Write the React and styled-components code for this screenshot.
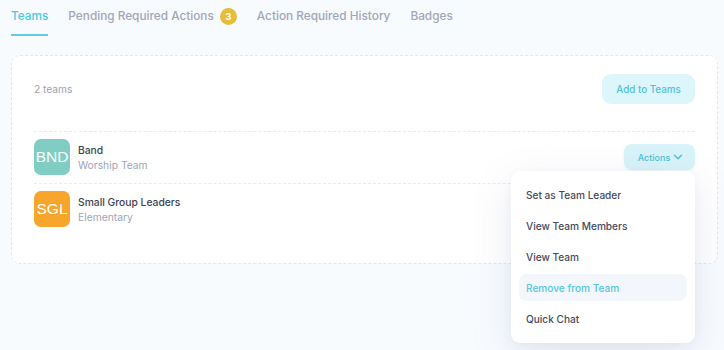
import React from "react";
import styled, { createGlobalStyle } from "styled-components";

const Global = createGlobalStyle`
  html, body { margin: 0; padding: 0; background: #f8fbfe; }
  body { font-family: Inter, "Noto Sans", sans-serif; -webkit-font-smoothing: antialiased; }
  * { box-sizing: border-box; }
`;

const Page = styled.div`
  padding: 0 6px 0 11px;
  height: 350px;
  overflow: hidden;
`;

const Tabs = styled.nav`
  display: flex;
  gap: 20px;
  height: 36px;
`;

const Tab = styled.div`
  display: flex;
  align-items: center;
  gap: 6px;
  height: 36px;
  padding-bottom: 2px;
  font-size: 11.8px;
  font-weight: 500;
  color: ${(p) => (p.$active ? "#4fc8de" : "#a2a6b9")};
  border-bottom: 2px solid ${(p) => (p.$active ? "#5fcfe3" : "transparent")};
`;

const Badge = styled.span`
  display: inline-flex;
  align-items: center;
  justify-content: center;
  width: 17px;
  height: 17px;
  border-radius: 50%;
  background: #e7bd3c;
  color: #fff;
  font-size: 9px;
  font-weight: 700;
`;

const Card = styled.section`
  margin-top: 19px;
  background: #fff;
  border: 1px dashed #e2e6ef;
  border-radius: 9px;
  padding: 18px 22px 28px;
`;

const Header = styled.div`
  display: flex;
  align-items: center;
  justify-content: space-between;
  margin-bottom: 27px;
`;

const Count = styled.span`
  font-size: 10.2px;
  color: #9da1b3;
`;

const PrimaryButton = styled.button`
  height: 30px;
  width: 93px;
  border: none;
  border-radius: 9px;
  background: #ddf6fb;
  color: #4dc3d9;
  font-family: inherit;
  font-size: 9.8px;
  font-weight: 500;
`;

const Row = styled.div`
  display: flex;
  align-items: center;
  gap: 8px;
  padding: 7px 0 8px;
  border-top: 1px dashed #e8ebf1;
  position: relative;
`;

const Avatar = styled.div`
  width: 36px;
  height: 36px;
  border-radius: 7px;
  background: ${(p) => p.$color};
  color: #fff;
  display: flex;
  align-items: center;
  justify-content: center;
  font-family: "Liberation Sans", Arial, sans-serif;
  font-size: 15.5px;
  flex-shrink: 0;
`;

const Info = styled.div`
  display: flex;
  flex-direction: column;
  gap: 3px;
  flex: 1;
`;

const Name = styled.span`
  font-size: 10.3px;
  font-weight: 500;
  color: #3e4254;
`;

const Sub = styled.span`
  font-size: 10.3px;
  color: #a1a4b6;
`;

const ActionsWrap = styled.div`
  position: relative;
`;

const ActionsButton = styled.button`
  display: flex;
  align-items: center;
  justify-content: center;
  gap: 3px;
  width: 71px;
  height: 26px;
  padding: 0 0 0 2px;
  border: none;
  border-radius: 8px;
  background: #d8f3f9;
  color: #4bbfd6;
  font-family: inherit;
  font-size: 9px;
  font-weight: 500;
  box-shadow: 0 1px 3px rgba(120, 190, 210, 0.15);
`;

const Menu = styled.ul`
  position: absolute;
  top: calc(100% + 1px);
  right: 0;
  width: 184px;
  margin: 0;
  list-style: none;
  padding: 10px 8px 11px;
  background: #fff;
  border-radius: 9px;
  box-shadow: 0 12px 40px rgba(110, 120, 170, 0.16), 0 2px 8px rgba(110, 120, 170, 0.06);
  display: flex;
  flex-direction: column;
  gap: 4px;
  z-index: 5;
`;

const MenuItem = styled.li`
  height: 27px;
  display: flex;
  align-items: center;
  padding: 0 7px;
  border-radius: 8px;
  font-size: 10.1px;
  font-weight: 500;
  color: ${(p) => (p.$active ? "#58c8de" : "#464a5b")};
  background: ${(p) => (p.$active ? "#f3f6fa" : "transparent")};
`;

const Chevron = () => (
  <svg width="10" height="10" viewBox="0 0 10 10" fill="none">
    <path d="M1.5 3.2 L5 6.7 L8.5 3.2" stroke="#4bbfd6" strokeWidth="1.4" strokeLinecap="round" strokeLinejoin="round" />
  </svg>
);

const teams = [
  { code: "BND", color: "#7fcdc3", name: "Band", sub: "Worship Team", open: true },
  { code: "SGL", color: "#f8a62b", name: "Small Group Leaders", sub: "Elementary" },
];

const menu = ["Set as Team Leader", "View Team Members", "View Team", "Remove from Team", "Quick Chat"];

export default function App() {
  return (
    <>
      <Global />
      <Page>
        <Tabs>
          <Tab $active>Teams</Tab>
          <Tab>
            Pending Required Actions <Badge>3</Badge>
          </Tab>
          <Tab>Action Required History</Tab>
          <Tab>Badges</Tab>
        </Tabs>
        <Card>
          <Header>
            <Count>2 teams</Count>
            <PrimaryButton>Add to Teams</PrimaryButton>
          </Header>
          {teams.map((t) => (
            <Row key={t.code}>
              <Avatar $color={t.color}>{t.code}</Avatar>
              <Info>
                <Name>{t.name}</Name>
                <Sub>{t.sub}</Sub>
              </Info>
              {t.open && (
                <ActionsWrap>
                  <ActionsButton>
                    Actions <Chevron />
                  </ActionsButton>
                  <Menu>
                    {menu.map((m) => (
                      <MenuItem key={m} $active={m === "Remove from Team"}>
                        {m}
                      </MenuItem>
                    ))}
                  </Menu>
                </ActionsWrap>
              )}
            </Row>
          ))}
        </Card>
      </Page>
    </>
  );
}
